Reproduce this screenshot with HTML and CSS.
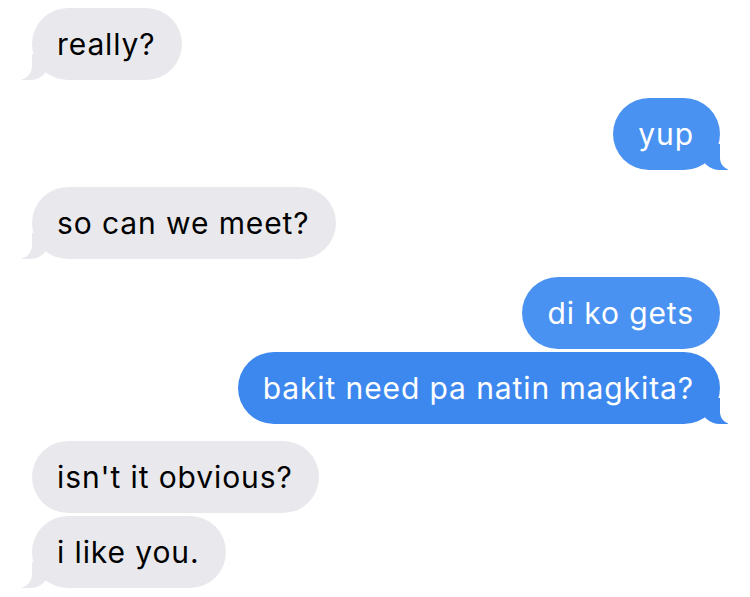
FILE: index.html
```html
<!DOCTYPE HTML>
<html>
<head>
<meta charset="utf-8">
<title>messages</title>
<link rel="stylesheet" href="styles.css">
</head>
<body>
	<div class="chat">
		<div class="group">
			<p class="msg them tail">really?</p>
		</div>
		<div class="group mine-group">
			<p class="msg me tail">yup</p>
		</div>
		<div class="group">
			<p class="msg them tail">so can we meet?</p>
		</div>
		<div class="group mine-group">
			<p class="msg me">di ko gets</p>
			<p class="msg me dark tail">bakit need pa natin magkita?</p>
		</div>
		<div class="group">
			<p class="msg them">isn't it obvious?</p>
			<p class="msg them tail">i like you.</p>
		</div>
	</div>
</body>
</html>
```

FILE: styles.css
```css
*{
	margin: 0;
	padding: 0;
	box-sizing: border-box;
}
body{
	background: #fff;
	font-family: Inter, "Liberation Sans", sans-serif;
}
.chat{
	display: flex;
	flex-direction: column;
	gap: 17.5px;
	padding: 8px 30px 0 32px;
}
.group{
	display: flex;
	flex-direction: column;
	align-items: flex-start;
	gap: 3px;
}
.mine-group{
	align-items: flex-end;
}
.msg{
	position: relative;
	font-size: 30px;
	letter-spacing: 0.9px;
	line-height: 36px;
	padding: 18px 26px 18px 25px;
	border-radius: 36px;
	white-space: nowrap;
}
.them{
	background: #e9e9ed;
	color: #000;
}
.me{
	background: #4a92f2;
	color: #fff;
}
.me.dark{
	background: #3d88ef;
}

/* tails */
.tail::before,
.tail::after{
	content: "";
	position: absolute;
	bottom: 0;
	height: 26px;
}
.them.tail::before{
	left: -10px;
	width: 28px;
	background: #e9e9ed;
	border-bottom-right-radius: 20px;
}
.them.tail::after{
	left: -14px;
	width: 14px;
	background: #fff;
	border-bottom-right-radius: 14px;
}
.me.tail::before{
	right: -8px;
	width: 28px;
	background: inherit;
	border-bottom-left-radius: 20px;
}
.me.tail::after{
	right: -12px;
	width: 12px;
	background: #fff;
	border-bottom-left-radius: 12px;
}
```
